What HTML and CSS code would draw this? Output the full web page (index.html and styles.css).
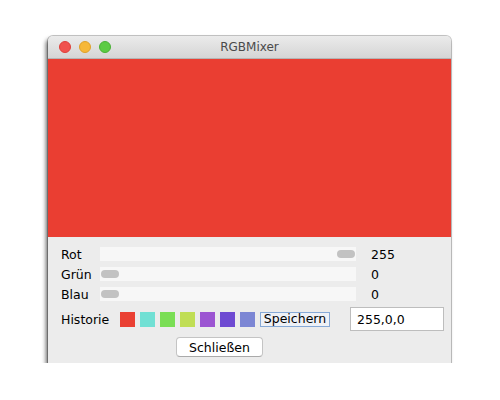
FILE: index.html
```html
<!DOCTYPE html>
<html>
<head>
<meta charset="utf-8">
<link rel="stylesheet" href="styles.css">
</head>
<body>
<div class="window">
  <div class="titlebar">
    <div class="lights">
      <span class="light red"></span>
      <span class="light yellow"></span>
      <span class="light green"></span>
    </div>
    <div class="title">RGBMixer</div>
  </div>
  <div class="preview"></div>
  <div class="controls">
    <div class="row">
      <span class="label">Rot</span>
      <div class="track end"><span class="knob"></span></div>
      <span class="value">255</span>
    </div>
    <div class="row">
      <span class="label">Grün</span>
      <div class="track"><span class="knob"></span></div>
      <span class="value">0</span>
    </div>
    <div class="row">
      <span class="label">Blau</span>
      <div class="track"><span class="knob"></span></div>
      <span class="value">0</span>
    </div>
    <div class="history">
      <span class="hlabel">Historie</span>
      <div class="swatches">
        <span class="sw c1"></span>
        <span class="sw c2"></span>
        <span class="sw c3"></span>
        <span class="sw c4"></span>
        <span class="sw c5"></span>
        <span class="sw c6"></span>
        <span class="sw c7"></span>
      </div>
      <span class="save">Speichern</span>
      <span class="field">255,0,0</span>
    </div>
    <div class="bottom">
      <span class="close">Schließen</span>
    </div>
  </div>
</div>
</body>
</html>
```
FILE: styles.css
```css
html, body {
  margin: 0;
  padding: 0;
  background: #ffffff;
}
body {
  padding: 36px 0 0 48px;
  font-family: "DejaVu Sans", "Liberation Sans", sans-serif;
  font-size: 12.5px;
  color: #000;
}
.window {
  width: 403px;
  height: 327px;
  background: #ececec;
  border-radius: 5px 5px 0 0;
  box-shadow: 0 0 0 1px rgba(0,0,0,0.22), -2px 3px 4px rgba(0,0,0,0.6);
  display: flex;
  flex-direction: column;
  overflow: hidden;
}
.titlebar {
  height: 22px;
  flex: none;
  background: linear-gradient(#ebebeb, #d5d5d5);
  border-bottom: 1px solid #b4b4b4;
  display: flex;
  align-items: center;
  position: relative;
}
.lights {
  display: flex;
  gap: 8px;
  padding-left: 11px;
}
.light {
  width: 12px;
  height: 12px;
  border-radius: 50%;
  box-sizing: border-box;
}
.red { background: #f0524e; border: 1px solid #de3f3a; }
.yellow { background: #f6b83a; border: 1px solid #dea12a; }
.green { background: #5ccb44; border: 1px solid #4ab036; }
.title {
  position: absolute;
  left: 0;
  right: 0;
  top: 0;
  bottom: 0;
  display: flex;
  align-items: center;
  justify-content: center;
  font-size: 12px;
  color: #4a4a4a;
}
.preview {
  height: 178px;
  flex: none;
  background: #ea3e32;
}
.controls {
  padding: 7px 0 0 13px;
  display: flex;
  flex-direction: column;
}
.row {
  height: 20px;
  display: flex;
  align-items: center;
}
.label {
  width: 39px;
}
.track {
  width: 256px;
  height: 14px;
  background: #f7f7f7;
  display: flex;
  align-items: center;
  padding: 0 1px;
  box-sizing: border-box;
}
.track.end {
  justify-content: flex-end;
}
.knob {
  width: 18px;
  height: 8px;
  border-radius: 4px;
  background: #c2c2c2;
}
.value {
  margin-left: 15px;
}
.history {
  margin-top: 3px;
  height: 24px;
  display: flex;
  align-items: center;
}
.hlabel {
  width: 59px;
}
.swatches {
  display: flex;
  gap: 5px;
}
.sw {
  width: 15px;
  height: 15px;
}
.c1 { background: #ea4033; }
.c2 { background: #71e0d4; }
.c3 { background: #7ade55; }
.c4 { background: #c0de55; }
.c5 { background: #9c55d2; }
.c6 { background: #6e4ad2; }
.c7 { background: #7c86d4; }
.save {
  margin-left: 5px;
  height: 15px;
  width: 70px;
  box-sizing: border-box;
  border: 1px solid #86a9d6;
  background: #eef1f6;
  display: flex;
  align-items: center;
  justify-content: center;
  line-height: 1;
}
.field {
  margin-left: 20px;
  width: 94px;
  height: 24px;
  box-sizing: border-box;
  border: 1px solid #bdbdbd;
  background: #fff;
  display: flex;
  align-items: center;
  padding-left: 6px;
}
.bottom {
  margin-top: 6px;
  padding-left: 115px;
  display: flex;
}
.close {
  width: 87px;
  height: 20px;
  box-sizing: border-box;
  border: 1px solid #c4c4c4;
  border-bottom-color: #aaaaaa;
  border-radius: 4px;
  background: #fff;
  display: flex;
  align-items: center;
  justify-content: center;
}
```
